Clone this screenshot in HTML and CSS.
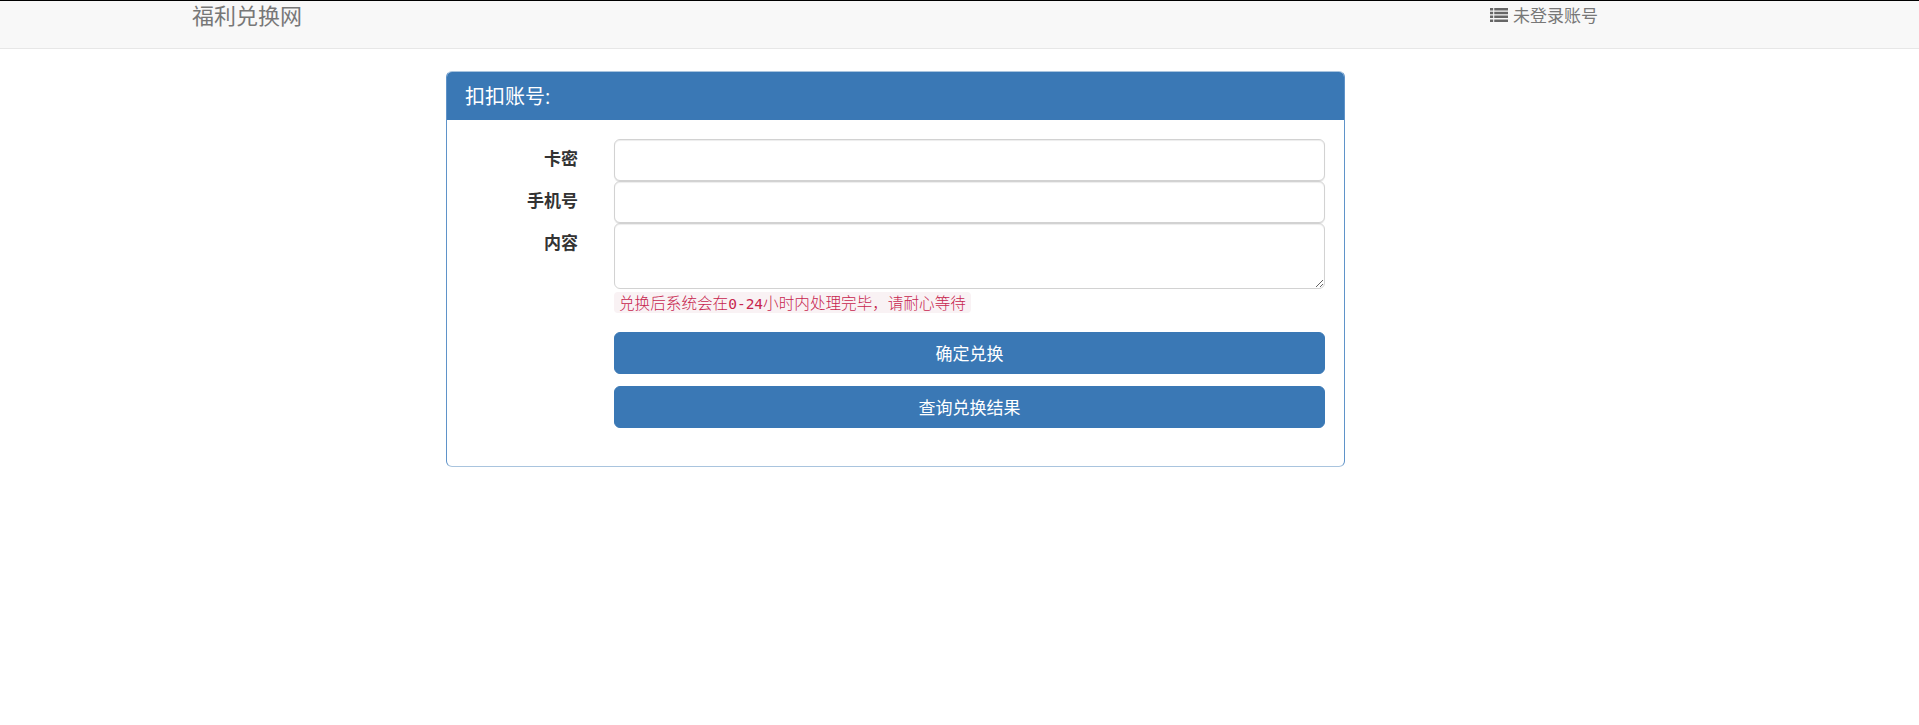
FILE: index.html
```html
<!DOCTYPE html>
<html lang="zh-CN">
<head>
<meta charset="utf-8">
<title>福利兑换网</title>
<link rel="stylesheet" href="styles.css">
</head>
<body>
<nav class="navbar">
  <a class="brand">福利兑换网</a>
  <a class="account">
    <svg class="icon" viewBox="0 0 17 14" width="18" height="14" preserveAspectRatio="none" aria-hidden="true">
      <path d="M0 0h3v2.5H0zM4 0h13v2.5H4zM0 3.8h3v2.5H0zM4 3.8h13v2.5H4zM0 7.6h3v2.5H0zM4 7.6h13v2.5H4zM0 11.4h3v2.5H0zM4 11.4h13v2.5H4z"/>
    </svg>
    <span>未登录账号</span>
  </a>
</nav>
<main class="panel">
  <h3 class="panel-heading">扣扣账号:</h3>
  <form class="panel-body">
    <label class="label">卡密</label>
    <input class="control" type="text">
    <label class="label">手机号</label>
    <input class="control" type="text">
    <label class="label">内容</label>
    <div class="field">
      <textarea class="control area"></textarea>
      <code class="hint">兑换后系统会在<span class="mono">0-24</span>小时内处理完毕&#xFF0C;请耐心等待</code>
    </div>
    <div class="actions">
      <button class="btn" type="button">确定兑换</button>
      <button class="btn" type="button">查询兑换结果</button>
    </div>
  </form>
</main>
</body>
</html>
```
FILE: styles.css
```css
* { box-sizing: border-box; }
html, body { margin: 0; padding: 0; }
body {
  background: #fff;
  color: #333;
  font-family: "Open Sans", "Noto Sans CJK SC", sans-serif;
  font-size: 17px;
  line-height: 1.43;
  border-top: 1px solid #000;
}
.navbar {
  display: flex;
  justify-content: space-between;
  height: 48px;
  padding: 0 321px 0 192px;
  background: #f8f8f8;
  border-bottom: 1px solid #e7e7e7;
  color: #777;
}
.brand { font-size: 22px; line-height: 28px; }
.account { display: flex; align-items: center; gap: 5px; height: 30px; font-size: 17px; }
.icon { fill: #666; display: block; margin-bottom: 2px; }
.panel {
  width: 899px;
  height: 396px;
  margin: 22px 0 0 446px;
  border: 1px solid #5f93c9;
  border-top-color: #a9c4de;
  border-bottom-color: #a9c4de;
  border-radius: 6px;
  overflow: hidden;
}
.panel-heading {
  margin: 0;
  height: 48px;
  padding: 10px 18px;
  background: #3a78b5;
  color: #fff;
  font-size: 20px;
  font-weight: 400;
  line-height: 30px;
}
.panel-body {
  display: grid;
  grid-template-columns: 131px 1fr;
  column-gap: 36px;
  padding: 19px 19px 0 0;
}
.label {
  font-weight: 700;
  text-align: right;
  line-height: 24px;
  padding-top: 8px;
}
.control {
  display: block;
  width: 100%;
  height: 42px;
  padding: 6px 12px;
  background: #fff;
  border: 1px solid #d2d2d2;
  border-radius: 6px;
  box-shadow: inset 0 1px 1px rgba(0,0,0,.075), 0 1px 1px rgba(0,0,0,.1);
  font: inherit;
}
.area { height: 66px; box-shadow: inset 0 1px 1px rgba(0,0,0,.075); }
.field { display: flex; flex-direction: column; align-items: flex-start; }
.hint {
  margin-top: 3px;
  padding: 0 5px;
  height: 21px;
  background: #f9f2f4;
  color: #c7254e;
  border-radius: 4px;
  font-family: "Noto Sans CJK SC", sans-serif;
  font-size: 15.6px;
  font-weight: 300;
  line-height: 20px;
}
.mono { font-family: "DejaVu Sans Mono", monospace; font-size: 14.5px; }
.actions {
  grid-column: 2;
  display: flex;
  flex-direction: column;
  gap: 12px;
  margin-top: 19px;
}
.btn {
  height: 42px;
  padding: 0 0 2px;
  border: 1px solid #3a78b5;
  border-radius: 6px;
  background: #3a78b5;
  color: #fff;
  font-family: inherit;
  font-size: 17px;
}
```
